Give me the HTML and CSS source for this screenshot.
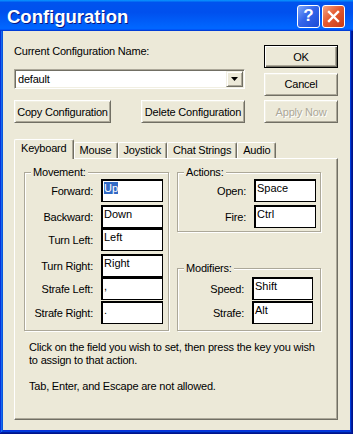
FILE: index.html
```html
<!DOCTYPE html>
<html>
<head>
  <meta charset="UTF-8">
  <title>Configuration</title>
  <link rel="stylesheet" href="styles.css">
</head>
<body>
  <div class="window">
    <div class="titlebar">
      <span class="title">Configuration</span>
      <div class="title-buttons">
        <div class="tbtn help">?</div>
        <div class="tbtn close">
          <svg width="13" height="13" viewBox="0 0 13 13">
            <path d="M2 2 L11 11 M11 2 L2 11" stroke="#fff" stroke-width="2.4" stroke-linecap="square"/>
          </svg>
        </div>
      </div>
    </div>

    <div class="client">
      <div class="top">
        <div class="config">
          <div class="label">Current Configuration Name:</div>
          <div class="combo">
            <span class="combo-value">default</span>
            <div class="combo-arrow">
              <svg width="7" height="4" viewBox="0 0 7 4"><path d="M0 0 H7 L3.5 4 Z" fill="#000"/></svg>
            </div>
          </div>
          <div class="config-buttons">
            <button class="btn copy">Copy Configuration</button>
            <button class="btn delete">Delete Configuration</button>
          </div>
        </div>
        <div class="dialog-buttons">
          <button class="btn default">OK</button>
          <button class="btn">Cancel</button>
          <button class="btn" disabled>Apply Now</button>
        </div>
      </div>

      <div class="tabs">
        <div class="tab selected">Keyboard</div>
        <div class="tab">Mouse</div>
        <div class="tab">Joystick</div>
        <div class="tab">Chat Strings</div>
        <div class="tab">Audio</div>
      </div>

      <div class="panel">
        <div class="groups">
          <fieldset class="group movement">
            <legend>Movement:</legend>
            <div class="keys">
              <label>Forward:</label><div class="key"><span class="sel">Up</span></div>
              <label>Backward:</label><div class="key">Down</div>
              <label>Turn Left:</label><div class="key">Left</div>
              <label>Turn Right:</label><div class="key">Right</div>
              <label>Strafe Left:</label><div class="key">,</div>
              <label>Strafe Right:</label><div class="key">.</div>
            </div>
          </fieldset>
          <div class="side">
            <fieldset class="group actions">
              <legend>Actions:</legend>
              <div class="keys">
                <label>Open:</label><div class="key">Space</div>
                <label>Fire:</label><div class="key">Ctrl</div>
              </div>
            </fieldset>
            <fieldset class="group modifiers">
              <legend>Modifiers:</legend>
              <div class="keys">
                <label>Speed:</label><div class="key">Shift</div>
                <label>Strafe:</label><div class="key">Alt</div>
              </div>
            </fieldset>
          </div>
        </div>
        <p class="hint">Click on the field you wish to set, then press the key you wish<br>to assign to that action.</p>
        <p class="hint">Tab, Enter, and Escape are not allowed.</p>
      </div>
    </div>
  </div>
</body>
</html>
```

FILE: styles.css
```css
body {
  margin: 0;
  font-family: "Liberation Sans", Arial, sans-serif;
  font-size: 11px;
  letter-spacing: -0.2px;
  color: #000;
}
.window {
  width: 353px;
  height: 434px;
  display: flex;
  flex-direction: column;
  background: #0831d9;
  box-shadow: inset -1px -1px #00138c, inset 1px 1px #0831d9, inset -2px -2px #001ea0, inset 2px 2px #166aee, inset -3px -3px #003bda, inset 3px 3px #0855dd;
}
.titlebar {
  height: 31px;
  box-sizing: border-box;
  display: flex;
  align-items: center;
  justify-content: space-between;
  padding: 0 8px 0 7px;
  background: linear-gradient(180deg, #0997ff, #0053ee 8%, #0050ee 40%, #06f 88%, #06f 93%, #005bff 95%, #003dd7 96%, #003dd7);
}
.title {
  color: white;
  font-weight: bold;
  font-size: 18.5px;
  letter-spacing: 0;
  text-shadow: 1px 1px 0 #0a1883;
  padding-top: 2px;
}
.title-buttons {
  display: flex;
  gap: 2px;
  padding-top: 1px;
}
.tbtn {
  width: 23px;
  height: 23px;
  box-sizing: border-box;
  border: 1px solid white;
  border-radius: 3px;
  display: flex;
  align-items: center;
  justify-content: center;
}
.help {
  background: linear-gradient(135deg, #7fa8fa, #3466ea 45%, #1a4bd6);
  color: white;
  font-weight: bold;
  font-size: 17px;
  letter-spacing: 0;
}
.close {
  background: linear-gradient(135deg, #f3a585, #e45a30 45%, #c83a15);
}

.client {
  flex: 1;
  margin: 0 3px 4px;
  background-color: #ece9d8;
  padding: 14px 12px 10px 11px;
  display: flex;
  flex-direction: column;
}
.top {
  display: flex;
  justify-content: space-between;
}
.config {
  width: 231px;
}
.label {
  line-height: 13px;
  margin-bottom: 11px;
}
.combo {
  height: 20px;
  box-sizing: border-box;
  display: flex;
  align-items: center;
  background: white;
  border: 1px solid;
  border-color: #aca899 #fff #fff #aca899;
  box-shadow: inset 1px 1px 0 #716f64, inset -1px -1px 0 #f1efe2;
  padding: 1px;
}
.combo-value {
  flex: 1;
  padding-left: 2px;
}
.combo-arrow {
  width: 17px;
  height: 16px;
  box-sizing: border-box;
  background-color: #ece9d8;
  border: 1px solid;
  border-color: #f1efe2 #716f64 #716f64 #f1efe2;
  box-shadow: inset 1px 1px 0 #fff, inset -1px -1px 0 #aca899;
  display: flex;
  align-items: center;
  justify-content: center;
}
.config-buttons {
  display: flex;
  justify-content: space-between;
  margin-top: 11px;
}
.btn {
  height: 23px;
  box-sizing: border-box;
  padding: 0;
  font: inherit;
  letter-spacing: inherit;
  color: #000;
  background-color: #ece9d8;
  border: 1px solid;
  border-color: #fff #716f64 #716f64 #fff;
  box-shadow: inset 1px 1px 0 #f1efe2, inset -1px -1px 0 #aca899;
}
.copy {
  width: 97px;
}
.delete {
  width: 104px;
}
.dialog-buttons {
  width: 74px;
  display: flex;
  flex-direction: column;
  justify-content: space-between;
}
.btn.default {
  border-color: #000;
  box-shadow: inset 1px 1px 0 #fff, inset -1px -1px 0 #716f64, inset -2px -2px 0 #aca899;
}
.btn:disabled {
  color: #aca899;
  text-shadow: 1px 1px 0 #fff;
}

.tabs {
  display: flex;
  align-items: flex-end;
  height: 20px;
  margin-top: 16px;
  margin-bottom: -1px;
  position: relative;
  z-index: 1;
}
.tab {
  height: 16px;
  box-sizing: border-box;
  margin-bottom: 1px;
  padding: 0 5px;
  line-height: 15px;
  background-color: #ece9d8;
  border-top: 1px solid #fff;
  border-left: 1px solid #fff;
  border-right: 1px solid #716f64;
  box-shadow: inset -1px 0 0 #aca899;
  border-radius: 2px 2px 0 0;
}
.tab.selected {
  height: 20px;
  margin-bottom: 0;
  padding: 0 6px;
  line-height: 17px;
}

.panel {
  flex: 1;
  border: 1px solid;
  border-color: #fff #716f64 #716f64 #fff;
  box-shadow: inset -1px -1px 0 #aca899;
  padding: 7px 16px 0 9px;
}
.groups {
  display: flex;
  gap: 8px;
}
.group {
  margin: 0;
  padding: 0;
  border: 1px solid #aca899;
  box-shadow: inset 1px 1px 0 #fff, 1px 1px 0 #fff;
}
.group legend {
  margin-left: 6px;
  padding: 0 2px;
  line-height: 13px;
  background-color: #ece9d8;
  position: relative;
}
.movement {
  width: 145px;
  box-sizing: border-box;
  padding: 0 5px 6px 0;
}
.side {
  width: 144px;
  display: flex;
  flex-direction: column;
  justify-content: space-between;
}
.actions {
  padding: 0 4px 3px 0;
}
.modifiers {
  padding: 2px 7px 6px 0;
}
.keys {
  display: grid;
  grid-template-columns: 1fr 62px;
  column-gap: 8px;
  align-items: start;
}
.movement .keys {
  grid-template-rows: 26px 23px 26px 23px 24px 23px;
}
.actions .keys {
  grid-template-rows: 26px 23px;
}
.modifiers .keys {
  grid-template-columns: 1fr 61px;
  grid-template-rows: 24px 23px;
}
.keys label {
  text-align: right;
  line-height: 24px;
}
.key {
  height: 23px;
  box-sizing: border-box;
  background: white;
  border: 1px solid #000;
  box-shadow: inset 1px 1px 0 #000;
  padding: 1px 2px;
  line-height: 15px;
  letter-spacing: 0;
}
.sel {
  background-color: #316ac5;
  color: white;
}
.hint {
  margin: 10px 0 0 5px;
  line-height: 13px;
}
.hint + .hint {
  margin-top: 13px;
}
```
